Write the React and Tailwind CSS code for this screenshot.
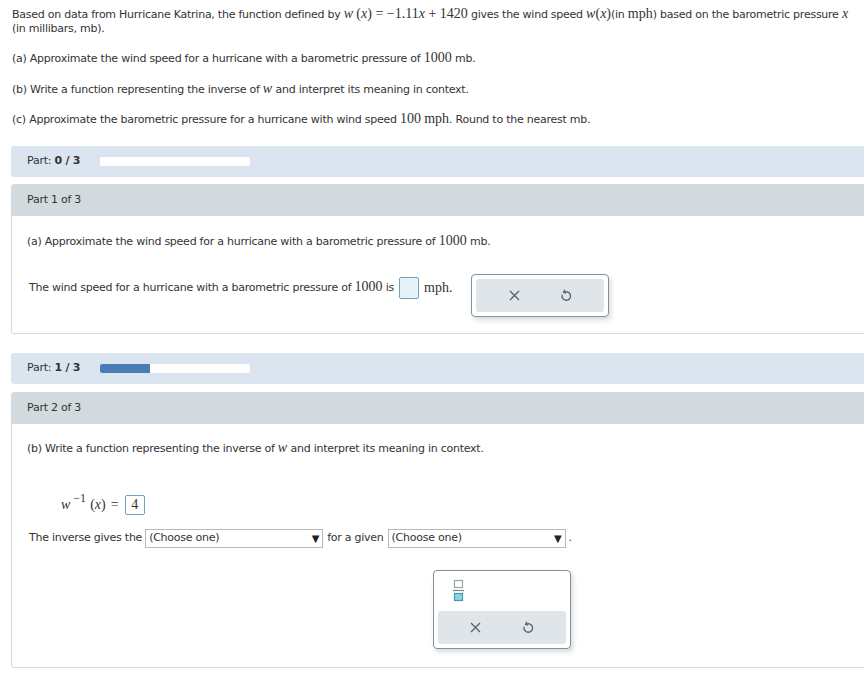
import React from 'react';

const sans = { fontFamily: '"DejaVu Sans", Verdana, sans-serif' };

const M = ({ children, className = '' }) => (
  <span className={`font-['Liberation_Serif',serif] text-[14px] leading-[0] tracking-normal ${className}`}>{children}</span>
);

const MI = ({ children }) => (
  <span className="font-['Liberation_Serif',serif] italic text-[14px] leading-[0] tracking-normal">{children}</span>
);

const XIcon = () => (
  <svg width="11" height="11" viewBox="0 0 11 11" className="text-[#4d6470]">
    <path d="M1 1 L10 10 M10 1 L1 10" stroke="currentColor" strokeWidth="1.3" fill="none" />
  </svg>
);

const UndoIcon = () => (
  <svg width="12" height="13" viewBox="0 0 12 13" className="text-[#4d6470]">
    <path d="M4.2 3.2 A4.3 4.3 0 1 1 2.2 5.6" stroke="currentColor" strokeWidth="1.3" fill="none" />
    <path d="M4.8 0.8 L3.6 3.3 L6.3 4.2" stroke="currentColor" strokeWidth="1.3" fill="none" />
  </svg>
);

const ToolPanel = () => (
  <div className="h-[33px] rounded-[3px] bg-[#dfe5e8] flex items-center justify-around px-[12px]">
    <XIcon />
    <UndoIcon />
  </div>
);

const ProgressBar = ({ done }) => (
  <div className="h-[31px] bg-[#dae5ef] rounded-l-[3px] flex items-center pl-[16px]">
    <span className="w-[73px] shrink-0">Part: <b className="font-bold">{done} / 3</b></span>
    <div className="w-[150px] h-[9px] bg-white rounded-[2px] overflow-hidden">
      {done > 0 && <div className="h-full bg-[#4a7cb6]" style={{ width: `${(done / 3) * 100}%` }} />}
    </div>
  </div>
);

const Select = ({ width }) => (
  <span className={`inline-flex items-center justify-between h-[19px] border border-[#b8b8b8] bg-white px-[3px] ${width}`}>
    <span>(Choose one)</span>
    <span className="text-[10px] text-[#222]">▼</span>
  </span>
);

export default function App() {
  return (
    <div className="w-[864px] h-[674px] bg-white overflow-hidden text-[11px] tracking-[-0.25px] text-[#333]" style={sans}>
      <div className="pl-[12px] pt-[8px] leading-[14px]">
        <p>
          Based on data from Hurricane Katrina, the function defined by <MI>w</MI> <M>(<i>x</i>) = −1.11<i>x</i> + 1420</M> gives the wind speed <MI>w</MI><M>(<i>x</i>)</M>(in <M>mph</M>) based on the barometric pressure <MI>x</MI>
          <br />(in millibars, mb).
        </p>
        <p className="mt-[16px]">(a) Approximate the wind speed for a hurricane with a barometric pressure of <M>1000</M> mb.</p>
        <p className="mt-[17px]">(b) Write a function representing the inverse of <MI>w</MI> and interpret its meaning in context.</p>
        <p className="mt-[16px]">(c) Approximate the barometric pressure for a hurricane with wind speed <M>100</M> <M>mph</M>. Round to the nearest mb.</p>
      </div>

      <div className="ml-[11px] w-[870px] mt-[19px]">
        <ProgressBar done={0} />

        <div className="mt-[7px] border border-[#d3dadd] rounded-[3px]">
          <div className="h-[31px] bg-[#d3dadd] flex items-center pl-[15px]">Part 1 of 3</div>
          <div className="h-[117px] pl-[15px]">
            <p className="pt-[18px]">(a) Approximate the wind speed for a hurricane with a barometric pressure of <M>1000</M> mb.</p>
            <div className="mt-[26px] flex items-start">
              <div className="pl-[2px] pt-[1px] flex items-center h-[22px]">
                <span>The wind speed for a hurricane with a barometric pressure of <M>1000</M> is</span>
                <span className="ml-[5px] inline-block w-[20px] h-[22px] border border-[#6ea5b5] bg-[#e4f3f8] rounded-[2px]" />
                <M className="ml-[5px] text-[13px]">mph.</M>
              </div>
              <div className="ml-[19px] -mt-[3px] w-[138px] h-[43px] border border-[#7d949d] rounded-[4px] shadow-[2px_3px_5px_rgba(0,0,0,0.15)] p-[4px]">
                <ToolPanel />
              </div>
            </div>
          </div>
        </div>

        <div className="mt-[19px]">
          <ProgressBar done={1} />
        </div>

        <div className="mt-[8px] border border-[#d3dadd] rounded-[3px]">
          <div className="h-[31px] bg-[#d3dadd] flex items-center pl-[15px]">Part 2 of 3</div>
          <div className="h-[243px] pl-[15px]">
            <p className="pt-[17px]">(b) Write a function representing the inverse of <MI>w</MI> and interpret its meaning in context.</p>
            <div className="mt-[37px] pl-[34px] flex items-center h-[20px]">
              <MI>w</MI>
              <span className="font-['Liberation_Serif',serif] text-[12px] tracking-normal relative -top-[7px] ml-[3px]">−1</span>
              <M className="ml-[4px]">(<i>x</i>)</M>
              <M className="ml-[5px]">=</M>
              <span className="ml-[6px] inline-flex items-center justify-center w-[20px] h-[20px] border border-[#6ea5b5] rounded-[2px] font-['Liberation_Serif',serif] text-[14px]">4</span>
            </div>
            <div className="mt-[14px] pl-[2px] flex items-center">
              <span className="mr-[3px]">The inverse gives the</span>
              <Select width="w-[178px]" />
              <span className="ml-[4px] mr-[4px]">for a given</span>
              <Select width="w-[178px]" />
              <span className="ml-[3px]">.</span>
            </div>
            <div className="mt-[22px] ml-[406px] w-[138px] h-[79px] border border-[#7d949d] rounded-[4px] shadow-[2px_3px_5px_rgba(0,0,0,0.15)] p-[4px] flex flex-col">
              <div className="h-[37px] pl-[15px] pt-[4px]">
                <svg width="12" height="24" viewBox="0 0 12 24">
                  <rect x="1.5" y="1.5" width="8" height="7" fill="#fff" stroke="#9aa4a8" strokeWidth="1.2" />
                  <line x1="0" y1="11.5" x2="11" y2="11.5" stroke="#7a8a90" strokeWidth="1.2" />
                  <rect x="1.5" y="14.5" width="8" height="7" fill="#8fd3e0" stroke="#3d9db0" strokeWidth="1.2" />
                </svg>
              </div>
              <ToolPanel />
            </div>
          </div>
        </div>
      </div>
    </div>
  );
}
